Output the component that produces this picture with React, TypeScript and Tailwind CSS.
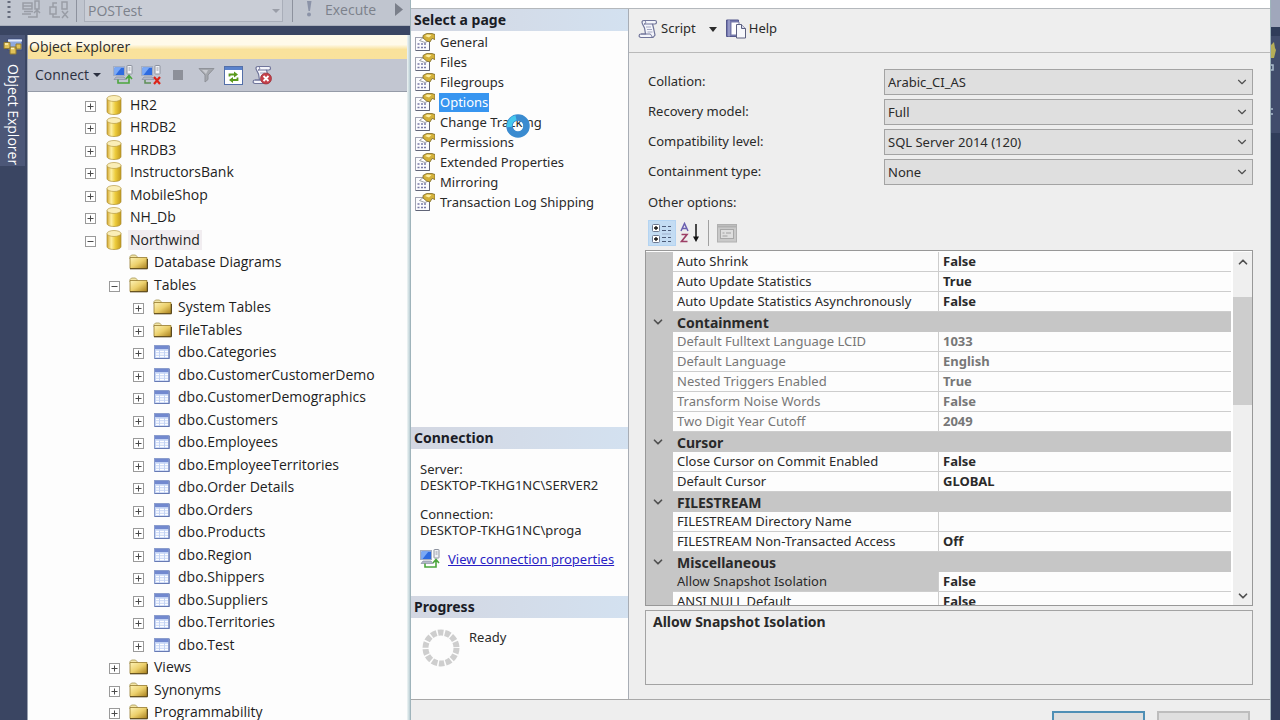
import type { ReactNode } from 'react';
import { ChevronDown, ChevronUp } from 'lucide-react';
import clsx from 'clsx';

type TreeKind = 'database' | 'folder' | 'table';

interface TreeItem {
    label: string;
    level: 0 | 1 | 2;
    kind: TreeKind;
    state: 'open' | 'closed' | 'leaf';
    selected?: boolean;
}

const databases: TreeItem[] = ['HR2', 'HRDB2', 'HRDB3', 'InstructorsBank', 'MobileShop', 'NH_Db'].map((label) => ({
    label,
    level: 0,
    kind: 'database',
    state: 'closed',
}));

const tables: TreeItem[] = [
    'Categories',
    'CustomerCustomerDemo',
    'CustomerDemographics',
    'Customers',
    'Employees',
    'EmployeeTerritories',
    'Order Details',
    'Orders',
    'Products',
    'Region',
    'Shippers',
    'Suppliers',
    'Territories',
    'Test',
].map((name) => ({ label: `dbo.${name}`, level: 2, kind: 'table', state: 'closed' }));

const treeItems: TreeItem[] = [
    ...databases,
    { label: 'Northwind', level: 0, kind: 'database', state: 'open', selected: true },
    { label: 'Database Diagrams', level: 1, kind: 'folder', state: 'leaf' },
    { label: 'Tables', level: 1, kind: 'folder', state: 'open' },
    { label: 'System Tables', level: 2, kind: 'folder', state: 'closed' },
    { label: 'FileTables', level: 2, kind: 'folder', state: 'closed' },
    ...tables,
    { label: 'Views', level: 1, kind: 'folder', state: 'closed' },
    { label: 'Synonyms', level: 1, kind: 'folder', state: 'closed' },
    { label: 'Programmability', level: 1, kind: 'folder', state: 'closed' },
];

const pages = [
    'General',
    'Files',
    'Filegroups',
    'Options',
    'Change Tracking',
    'Permissions',
    'Extended Properties',
    'Mirroring',
    'Transaction Log Shipping',
];

const dropdowns = [
    { id: 'collation', label: 'Collation:', value: 'Arabic_CI_AS' },
    { id: 'recovery', label: 'Recovery model:', value: 'Full' },
    { id: 'compatibility', label: 'Compatibility level:', value: 'SQL Server 2014 (120)' },
    { id: 'containment', label: 'Containment type:', value: 'None' },
];

interface GridRow {
    name: string;
    value?: string;
    category?: boolean;
    disabled?: boolean;
    selected?: boolean;
}

const gridRows: GridRow[] = [
    { name: 'Auto Shrink', value: 'False' },
    { name: 'Auto Update Statistics', value: 'True' },
    { name: 'Auto Update Statistics Asynchronously', value: 'False' },
    { name: 'Containment', category: true },
    { name: 'Default Fulltext Language LCID', value: '1033', disabled: true },
    { name: 'Default Language', value: 'English', disabled: true },
    { name: 'Nested Triggers Enabled', value: 'True', disabled: true },
    { name: 'Transform Noise Words', value: 'False', disabled: true },
    { name: 'Two Digit Year Cutoff', value: '2049', disabled: true },
    { name: 'Cursor', category: true },
    { name: 'Close Cursor on Commit Enabled', value: 'False' },
    { name: 'Default Cursor', value: 'GLOBAL' },
    { name: 'FILESTREAM', category: true },
    { name: 'FILESTREAM Directory Name', value: '' },
    { name: 'FILESTREAM Non-Transacted Access', value: 'Off' },
    { name: 'Miscellaneous', category: true },
    { name: 'Allow Snapshot Isolation', value: 'False', selected: true },
    { name: 'ANSI NULL Default', value: 'False' },
];

/* ---------- icons ---------- */

function DatabaseIcon() {
    return (
        <svg width="16" height="20" viewBox="0 0 16 20">
            <defs>
                <linearGradient id="db-body" x1="0" x2="1">
                    <stop offset="0" stopColor="#d3a52c" />
                    <stop offset="0.3" stopColor="#fdf0a4" />
                    <stop offset="0.6" stopColor="#eccb3c" />
                    <stop offset="1" stopColor="#c39a1c" />
                </linearGradient>
            </defs>
            <path d="M1 3.5v13C1 18.4 4 19.5 8 19.5s7-1.1 7-3v-13z" fill="url(#db-body)" stroke="#ab8d34" strokeWidth="0.7" />
            <ellipse cx="8" cy="3.5" rx="7" ry="3" fill="#faeeb8" stroke="#b79c48" strokeWidth="0.7" />
        </svg>
    );
}

function FolderIcon() {
    return (
        <svg width="19" height="16" viewBox="0 0 19 16">
            <defs>
                <linearGradient id="folder-body" x1="0" y1="0" x2="1" y2="1">
                    <stop offset="0" stopColor="#fdf3b8" />
                    <stop offset="0.5" stopColor="#ecd06c" />
                    <stop offset="1" stopColor="#a87f1c" />
                </linearGradient>
            </defs>
            <path d="M1 5V2.5L2.5 1h4L8 2.5V4" fill="#f3e6a8" stroke="#a59450" strokeWidth="0.8" />
            <path d="M1 3.5h17v11H1z" fill="url(#folder-body)" stroke="#94792c" strokeWidth="0.8" />
            <path d="M1 14.8h17.4V5" fill="none" stroke="#4d3b10" strokeWidth="1" />
        </svg>
    );
}

function TableIcon() {
    return (
        <svg width="16" height="14" viewBox="0 0 16 14">
            <rect x="0.5" y="0.5" width="14.5" height="13" fill="#c3d3f4" stroke="#8b9dcd" />
            <rect x="1" y="1" width="13.5" height="3" fill="#7289cf" />
            <path d="M2 6.500h3M6 6.500h4M11 6.500h3M2 9h3M6 9h4M11 9h3M2 11.500h3M6 11.500h4M11 11.500h3" stroke="#fff" strokeWidth="1.6" />
            <path d="M15.200 1v12.700H1" fill="none" stroke="#5a6eaa" strokeWidth="0.9" />
        </svg>
    );
}

const treeIcons: Record<TreeKind, ReactNode> = {
    database: <DatabaseIcon />,
    folder: <FolderIcon />,
    table: <TableIcon />,
};

function ServerIcon({ badge }: { badge: 'arrow' | 'cross' }) {
    return (
        <svg width="20" height="20" viewBox="0 0 20 20">
            <rect x="0.5" y="1.5" width="11" height="9" fill="#d5dbe8" stroke="#a4adc0" />
            <rect x="1.5" y="2.5" width="9.5" height="7.5" fill="#2e6be0" />
            <path d="M1.500 2.500h7L2.500 10h-1z" fill="#7ba9f5" />
            <path d="M3 12h8l2 2.500H1z" fill="#b4bac8" stroke="#7f879c" strokeWidth="0.6" />
            <rect x="14" y="0.5" width="5" height="8.5" rx="0.5" fill="#f2f3f7" stroke="#8d929e" />
            <path d="M15.500 3h2M15.500 5h2" stroke="#7c8290" strokeWidth="0.8" />
            {badge === 'arrow' ? (
                <path d="M5 14.500v3.500h11v-6M13 14l3-3.500 3 3.500" fill="none" stroke="#4ba63c" strokeWidth="1.6" />
            ) : (
                <>
                    <path d="M4 15v3h6" fill="none" stroke="#5d8f55" strokeWidth="1.5" />
                    <path d="M13 12l6 7M19 12l-6 7" stroke="#dc2418" strokeWidth="2.2" />
                </>
            )}
        </svg>
    );
}

function FadedServerIcon({ cross }: { cross?: boolean }) {
    return (
        <svg width="20" height="19" viewBox="0 0 20 19" fill="none" stroke="#999da6" strokeWidth="1.5">
            {cross ? (
                <path d="M1 7h6v7H1zM4 7V3h4M13 2h5v7h-5zM4 14v3h7M13 11l6 7M19 11l-6 7" />
            ) : (
                <path d="M2 3h9v6H2zM2 6h9M3 11.500h9M1 14h9M14 1h4v8h-4zM7 17h9v-5M13 13l3-3 3 3" />
            )}
        </svg>
    );
}

function FilterIcon() {
    return (
        <svg width="17" height="16" viewBox="0 0 17 16">
            <path d="M1 1.500h15l-6 6.500v4.500L7 15V8z" fill="#a4a7ad" stroke="#8f9299" />
            <path d="M4 3h6L8 7z" fill="#c8cad0" />
        </svg>
    );
}

function RefreshIcon() {
    return (
        <svg width="19" height="19" viewBox="0 0 19 19">
            <rect x="0.5" y="0.5" width="18" height="18" fill="#fff" stroke="#536fa8" />
            <rect x="1" y="1" width="17" height="3" fill="#5a82cc" />
            <path d="M5.500 10.500V8.500H11M13.500 11.500v2.500H8" fill="none" stroke="#5a9a1c" strokeWidth="1.8" />
            <path d="M10 5.500l4 3-4 3zM9 11v6l-4-3z" fill="#5a9a1c" />
        </svg>
    );
}

function ScrollIcon({ error }: { error?: boolean }) {
    return (
        <svg width="20" height="20" viewBox="0 0 20 20">
            <path
                d="M6 1.500h11c2 0 2 3.500 0 3.500h-2.500l1 4 1.500 7-2 2.500H3c-2.500 0-2.500-3.500 0-3.500h4.500L6.500 9 4.500 5C3.500 3 4 1.500 6 1.500z"
                fill="#f4f5fb"
                stroke="#70759a"
                strokeWidth="1.2"
            />
            <path d="M6 1.500c2 0 2.500 3.500 0 3.500M14.500 5H6M3 15h9c1.500 0 1.500 3.500 3 3.500" fill="none" stroke="#70759a" />
            <path d="M8 8h5M9 10.500h5M9.500 13h5" stroke="#a3a7c2" />
            {error && (
                <>
                    <circle cx="14" cy="13.5" r="5.500" fill="#c5404a" stroke="#96303a" strokeWidth="0.7" />
                    <path d="M11.500 11l5 5M16.500 11l-5 5" stroke="#fff" strokeWidth="1.8" />
                </>
            )}
        </svg>
    );
}

function HelpIcon() {
    return (
        <svg width="20" height="20" viewBox="0 0 20 20">
            <path d="M0.500 1h12v16.500h-12z" fill="#7578b0" stroke="#55588c" />
            <path d="M3 1v16.500" stroke="#b6b8dc" />
            <path d="M5 3h8v13H5z" fill="#fff" stroke="#777aa8" />
            <path d="M10.500 5.500h5l4 4V19h-9z" fill="#f7f8fc" stroke="#5c6080" />
            <path d="M15.500 5.500v4h4" fill="#d8daea" stroke="#5c6080" />
        </svg>
    );
}

function PropertyPageIcon() {
    return (
        <svg width="20" height="18" viewBox="0 0 20 18" className="shrink-0">
            <rect x="0.5" y="4.5" width="14" height="13" fill="#fbfbfd" stroke="#9fa2b0" />
            <path d="M2.500 11h2M6 11h2M9 11h2M2.500 14.500h2M6 14.500h2M9 14.500h2" stroke="#7779a4" strokeWidth="1.4" />
            <path d="M14.500 9v8.500H1" fill="none" stroke="#606477" />
            <path d="M4.500 7.500L9 4l4.500 4-3.500 1.500z" fill="#fff" stroke="#85868e" strokeWidth="0.8" />
            <path d="M8 2.500L11.500 0.500H17l3 1v5l-3-1-2 3.500-3.500-1L8 5z" fill="#d3b03a" stroke="#7b6a28" strokeWidth="0.8" />
            <path d="M10 3l2.500-1.500 4 0.500-2.500 2.500z" fill="#fdeea0" />
        </svg>
    );
}

function CategorizedIcon() {
    return (
        <svg width="20" height="20" viewBox="0 0 20 20">
            <g fill="#fff" stroke="#6c7890">
                <rect x="0.5" y="1.5" width="7" height="7" rx="1" />
                <rect x="0.5" y="12.5" width="7" height="7" rx="1" />
            </g>
            <path d="M2 5h4M4 3v4M2 16h4M4 14v4" stroke="#111" strokeWidth="1.3" />
            <path d="M10 3.500h4M16 3.500h3M10 7.500h4M16 7.500h3M10 14.500h4M16 14.500h3M10 18.500h4M16 18.500h3" stroke="#4d5c78" />
            <path d="M10 11h9" stroke="#9fb1cc" />
        </svg>
    );
}

function SortIcon() {
    return (
        <svg width="20" height="22" viewBox="0 0 20 22" fill="none">
            <path d="M1 9L4.500 1.500 8 9M2.300 6.500h4.400" stroke="#6a5fb0" strokeWidth="1.5" />
            <path d="M1.500 12.500H7L1.500 19.500h6" stroke="#9c3f66" strokeWidth="1.6" />
            <path d="M16 2v14" stroke="#111" strokeWidth="1.5" />
            <path d="M13 14.500h6L16 20z" fill="#111" />
        </svg>
    );
}

function PropertyPagesIcon() {
    return (
        <svg width="20" height="19" viewBox="0 0 20 19">
            <rect x="0.5" y="0.5" width="19" height="17.5" fill="#c9c9c9" stroke="#b0b0b0" />
            <path d="M1 2.500h18" stroke="#b0b0b0" strokeWidth="2" />
            <rect x="3.5" y="5.5" width="13" height="9" fill="#dedede" stroke="#a8a8a8" />
            <path d="M5.500 9h2M9 9h5M5.500 12h5" stroke="#a0a0a0" />
        </svg>
    );
}

function ExplorerTabIcon() {
    return (
        <svg width="20" height="18" viewBox="0 0 20 18">
            <rect x="5" y="1" width="14" height="11" fill="#8fa9e0" stroke="#3d4c7c" />
            <path d="M5 2.500h14" stroke="#e4ebfa" strokeWidth="2" />
            <path d="M1 4.500h6v6H1zM7 9h6v7H7zM13 6h5v5h-5z" fill="#e0c158" stroke="#8f7832" />
            <path d="M2 6h3M8 10.500h3" stroke="#fff2b8" strokeWidth="1.5" />
        </svg>
    );
}

function ProgressRing() {
    return (
        <svg width="40" height="40" viewBox="0 0 40 40">
            <circle cx="20" cy="20" r="15.5" fill="none" stroke="#cecece" strokeWidth="6" strokeDasharray="5.457 1.5" />
        </svg>
    );
}

function BusyCursor() {
    return (
        <svg width="26" height="26" viewBox="0 0 26 26">
            <circle cx="13" cy="13" r="8.500" fill="none" stroke="#3a8bd0" strokeWidth="6.500" />
            <path d="M4.500 14a8.500 8.500 0 0 1 6.500-9.300" fill="none" stroke="#45c8ee" strokeWidth="5" />
        </svg>
    );
}

/* ---------- left side: main window ---------- */

function MainToolbar() {
    return (
        <div className="flex h-[26px] shrink-0 items-start overflow-hidden border-b border-[#a9afbb] bg-[#c0c5cf] text-[14px] leading-[20px] text-[#7c818b]">
            <svg width="4" height="20" className="ml-[7px]">
                <path d="M2 1v19" stroke="#666c7c" strokeWidth="3" strokeDasharray="2 3" />
            </svg>
            <div className="ml-[10px] flex items-center gap-2">
                <button type="button" aria-label="Connect"><FadedServerIcon /></button>
                <button type="button" aria-label="Disconnect"><FadedServerIcon cross /></button>
            </div>
            <div className="ml-[7px] h-[22px] w-px bg-[#8d929e]" />
            <div className="relative ml-[7px] w-[199px]">
                <select
                    aria-label="Database"
                    className="block h-[22px] w-full appearance-none border border-t-0 border-[#a9aeb9] bg-[#c9cdd6] pl-[3px] outline-none"
                >
                    <option>POSTest</option>
                </select>
                <div className="pointer-events-none absolute top-[9px] right-[3px] border-x-4 border-t-4 border-x-transparent border-t-[#9a9ea8]" />
            </div>
            <div className="ml-[9px] h-[22px] w-px bg-[#8d929e]" />
            <button type="button" className="ml-[12px] flex items-start gap-[12px]">
                <svg width="8" height="18" viewBox="0 0 8 18">
                    <path d="M2 1h4.500L5 11H3.500z" fill="#8b93a8" />
                    <circle cx="4" cy="14.5" r="2" fill="#8b93a8" />
                </svg>
                Execute
            </button>
            <svg width="9" height="14" className="mt-[3px] ml-[19px]">
                <path d="M0 0v13l8-6.500z" fill="#7a7f8a" />
            </svg>
        </div>
    );
}

function Expander({ state }: { state: TreeItem['state'] }) {
    if (state === 'leaf') return <span className="w-[11px]" />;
    return (
        <button type="button" aria-label={state === 'open' ? 'Collapse' : 'Expand'} className="mt-[3px]">
            <svg width="11" height="11" viewBox="0 0 11 11" className="block">
                <rect x="0.5" y="0.5" width="10" height="10" fill="#fff" stroke="#9a9a9a" />
                <path d={state === 'open' ? 'M2.500 5.500h6' : 'M2.500 5.500h6M5.500 2.500v6'} stroke="#4b4b4b" />
            </svg>
        </button>
    );
}

function TreeRow({ item }: { item: TreeItem }) {
    return (
        <li
            className={clsx(
                'flex items-center whitespace-nowrap odd:h-[23px] even:h-[22px]',
                item.level === 0 && 'pl-[57px]',
                item.level === 1 && 'pl-[81px]',
                item.level === 2 && 'pl-[105px]',
            )}
        >
            <Expander state={item.state} />
            <span className="ml-2 flex w-5 justify-center">{treeIcons[item.kind]}</span>
            <span className={clsx('ml-1 px-[2px] leading-5', item.selected && 'bg-[#f1edf0]')}>{item.label}</span>
        </li>
    );
}

function ObjectExplorer() {
    return (
        <section className="flex min-w-0 flex-1 flex-col border-l border-[#9aa1b0] bg-[#fdfdfd] text-[14px] text-[#1e1e1e]">
            <h2 className="flex h-6 shrink-0 items-center bg-linear-to-b from-[#fffaea] from-40% to-[#f9e29c] to-60% pb-px pl-px text-[#2c2c2c]">
                Object Explorer
            </h2>
            <div className="flex h-[33px] shrink-0 items-center border-b border-[#959ba8] bg-[#c2c6d1] pl-[7px]">
                <button type="button" className="flex items-center gap-1 pb-px text-[#2b3040]">
                    Connect
                    <span className="border-x-4 border-t-4 border-x-transparent border-t-[#2b3040]" />
                </button>
                <div className="ml-3 flex items-center gap-2">
                    <button type="button" aria-label="Connect server"><ServerIcon badge="arrow" /></button>
                    <button type="button" aria-label="Disconnect server"><ServerIcon badge="cross" /></button>
                </div>
                <button type="button" aria-label="Stop" className="ml-3 size-[10px] bg-[#8d9099]" />
                <button type="button" aria-label="Filter" className="ml-[15px]"><FilterIcon /></button>
                <button type="button" aria-label="Refresh" className="ml-[9px]"><RefreshIcon /></button>
                <button type="button" aria-label="Clear script" className="ml-[9px]"><ScrollIcon error /></button>
            </div>
            <ul className="flex-1 overflow-hidden pt-px">
                {treeItems.map((item) => (
                    <TreeRow key={item.label} item={item} />
                ))}
            </ul>
        </section>
    );
}

function MainWindow() {
    return (
        <div className="flex w-[410px] shrink-0 flex-col bg-[#3a4562] font-['Open_Sans',sans-serif]">
            <MainToolbar />
            <div className="flex min-h-0 flex-1 pt-[9px]">
                <div className="w-[27px] shrink-0">
                    <button type="button" className="flex h-[131px] w-[25px] flex-col items-center gap-2 bg-[#4c5778] pt-[3px] text-[14px] text-white">
                        <ExplorerTabIcon />
                        <span className="leading-5 whitespace-nowrap [writing-mode:vertical-rl]">Object Explorer</span>
                    </button>
                </div>
                <ObjectExplorer />
                <div className="w-[3px] bg-linear-to-r from-[#f0f6f6] to-[#b9cdd3]" />
            </div>
        </div>
    );
}

/* ---------- database properties dialog ---------- */

function SectionTitle({ children }: { children: ReactNode }) {
    return (
        <h3 className="h-[22px] shrink-0 bg-linear-to-r from-[#d3d7e2] to-[#d3e1f0] pl-[3px] text-[14px] leading-[21px] font-bold text-[#1a1c26]">
            {children}
        </h3>
    );
}

function PageSidebar() {
    return (
        <aside className="flex w-[218px] shrink-0 flex-col border-r border-[#a8adb5] bg-[#fdfdfd]">
            <SectionTitle>Select a page</SectionTitle>
            <nav className="relative flex-1 pt-px">
                {pages.map((page) => (
                    <a key={page} href="#" className="flex h-5 items-center gap-1 pl-1 whitespace-nowrap">
                        <PropertyPageIcon />
                        <span className={clsx('px-px leading-[19px]', page === 'Options' && 'bg-[#3795f0] text-white')}>{page}</span>
                    </a>
                ))}
                <div className="pointer-events-none absolute top-[82px] left-[94px]">
                    <BusyCursor />
                </div>
            </nav>
            <SectionTitle>Connection</SectionTitle>
            <div className="h-[147px] pt-3 pl-[9px] leading-4 whitespace-nowrap">
                <p>Server:</p>
                <p>DESKTOP-TKHG1NC\SERVER2</p>
                <p className="mt-[13px]">Connection:</p>
                <p>DESKTOP-TKHG1NC\proga</p>
                <div className="mt-[11px] flex items-center gap-2">
                    <ServerIcon badge="arrow" />
                    <a href="#" className="text-[#2a1fc4] underline">View connection properties</a>
                </div>
            </div>
            <SectionTitle>Progress</SectionTitle>
            <div className="flex h-[81px] gap-2 pt-[10px] pl-[10px] leading-[18px]">
                <ProgressRing />
                <span>Ready</span>
            </div>
        </aside>
    );
}

function PropertyGrid() {
    return (
        <div className="flex h-[356px] overflow-hidden border border-[#989898] bg-[#fdfdfd] pt-px">
            <div className="min-w-0 flex-1 overflow-hidden">
                <table className="w-full table-fixed border-separate border-spacing-0 leading-[19px]">
                    <colgroup>
                        <col className="w-[27px]" />
                        <col className="w-[266px]" />
                        <col />
                    </colgroup>
                    <tbody>
                        {gridRows.map((row) =>
                            row.category ? (
                                <tr key={row.name} className="h-5 bg-[#c6c6c6]">
                                    <td className="p-0">
                                        <ChevronDown size={14} strokeWidth={3} color="#505050" className="ml-[5px]" />
                                    </td>
                                    <th colSpan={2} className="p-0 pl-1 text-left text-[14px]">{row.name}</th>
                                </tr>
                            ) : (
                                <tr key={row.name} className={clsx('h-5', row.disabled && 'text-[#777]')}>
                                    <td className="bg-[#c6c6c6] p-0" />
                                    <td
                                        className={clsx(
                                            'border-r border-b border-[#cdcdcd] p-0 pl-1 whitespace-nowrap',
                                            row.selected && 'bg-[#c6c6c6]',
                                        )}
                                    >
                                        {row.name}
                                    </td>
                                    <td className="border-b border-[#cdcdcd] p-0 pl-1 text-[13px] font-bold">{row.value}</td>
                                </tr>
                            ),
                        )}
                    </tbody>
                </table>
            </div>
            <div className="flex w-[21px] shrink-0 flex-col items-center border-l-2 border-white bg-[#efefef]">
                <button type="button" aria-label="Scroll up" className="flex h-[45px] pt-[3px]">
                    <ChevronUp size={14} strokeWidth={3} color="#505050" />
                </button>
                <div className="h-[108px] w-full bg-[#cdcdcd]" />
                <button type="button" aria-label="Scroll down" className="mt-auto pb-[2px]">
                    <ChevronDown size={14} strokeWidth={3} color="#505050" />
                </button>
            </div>
        </div>
    );
}

function OptionsPage() {
    return (
        <main className="flex min-w-0 flex-1 flex-col">
            <div className="flex h-11 shrink-0 items-center border-b border-[#b9b9b9] pb-[3px] pl-[9px]">
                <button type="button" className="flex items-center gap-[3px]">
                    <ScrollIcon />
                    Script
                </button>
                <button type="button" aria-label="Script options" className="ml-3 p-px">
                    <span className="block border-x-4 border-t-[5px] border-x-transparent border-t-[#2b2b2b]" />
                </button>
                <button type="button" className="ml-2 flex items-center gap-[3px]">
                    <HelpIcon />
                    Help
                </button>
            </div>
            <div className="flex flex-1 flex-col pt-4 pr-[17px] pl-4">
                <div className="flex flex-col gap-1">
                    {dropdowns.map((d) => (
                        <div key={d.id} className="flex items-center">
                            <label htmlFor={d.id} className="w-[239px] shrink-0 pl-[3px]">{d.label}</label>
                            <div className="relative min-w-0 flex-1">
                                <select
                                    id={d.id}
                                    className="block h-[26px] w-full appearance-none border border-[#a3a3a3] bg-[#dfdfdf] pt-px pl-[3px] outline-none"
                                >
                                    <option>{d.value}</option>
                                </select>
                                <ChevronDown size={14} color="#505050" className="pointer-events-none absolute top-[6px] right-1" />
                            </div>
                        </div>
                    ))}
                </div>
                <p className="mt-[7px] pl-[3px] leading-5">Other options:</p>
                <div className="mt-2 mb-1 flex h-[26px] items-center pl-[3px]">
                    <button type="button" aria-label="Categorized" className="flex h-[26px] w-7 items-center justify-center border border-[#b4d4f2] bg-[#c3dcf3]">
                        <CategorizedIcon />
                    </button>
                    <button type="button" aria-label="Alphabetical" className="ml-1">
                        <SortIcon />
                    </button>
                    <div className="ml-2 h-[26px] w-px bg-[#a0a0a0]" />
                    <button type="button" aria-label="Property pages" className="ml-2" disabled>
                        <PropertyPagesIcon />
                    </button>
                </div>
                <PropertyGrid />
                <div className="mt-1 h-[75px] border border-[#a3a3a3] pt-px pl-[7px] text-[14px] leading-5 font-bold">
                    Allow Snapshot Isolation
                </div>
            </div>
        </main>
    );
}

function PropertiesDialog() {
    return (
        <div
            role="dialog"
            aria-label="Database Properties"
            className="flex min-w-0 flex-1 flex-col border-x border-[#9fb4bb] bg-[#eee] font-['Noto_Sans',sans-serif] text-[13px] text-[#2a2a2a]"
        >
            <div className="h-[9px] shrink-0 border-b border-[#b4b8bc] bg-white" />
            <div className="flex min-h-0 flex-1">
                <PageSidebar />
                <OptionsPage />
            </div>
            <footer className="flex h-[21px] shrink-0 items-start justify-end gap-3 border-t border-[#a8a8a8] pt-[11px] pr-5">
                <button type="button" className="h-[30px] w-[93px] shrink-0 border-2 border-[#4f8fb5] bg-[#dfdfdf]">OK</button>
                <button type="button" className="h-[30px] w-[93px] shrink-0 border-2 border-[#bdbdbd] bg-[#dfdfdf]">Cancel</button>
            </footer>
        </div>
    );
}

/* Sliver of the main window that shows to the right of the dialog. */
function RightEdge() {
    return (
        <div className="flex w-[9px] shrink-0 flex-col bg-[#303d5a]">
            <div className="h-[27px] bg-[#a0a7bb]" />
            <div className="mt-[9px] h-[97px] bg-[#414d6c]">
                <svg width="9" height="97" viewBox="0 0 9 97">
                    <path d="M0 9l3-3 1 6 1 2-2 8H0z" fill="#b5ae58" />
                    <path d="M0 29h2v5H0M0 73h2M0 78h2" stroke="#a9bccb" strokeWidth="1.5" fill="none" />
                </svg>
            </div>
        </div>
    );
}

export default function App() {
    return (
        <div className="flex h-screen overflow-hidden bg-[#303d5a]">
            <MainWindow />
            <PropertiesDialog />
            <RightEdge />
        </div>
    );
}
